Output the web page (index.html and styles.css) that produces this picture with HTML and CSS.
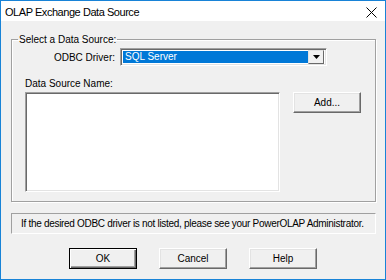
FILE: index.html
```html
<!DOCTYPE html>
<html lang="en">
<head>
    <meta charset="UTF-8">
    <title>OLAP Exchange Data Source</title>
    <link rel="stylesheet" href="styles.css">
</head>
<body>

    <div class="window">
        <div class="titlebar">
            <span class="title">OLAP Exchange Data Source</span>
            <span class="close">
                <svg width="11" height="11" viewBox="0 0 11 11">
                    <path d="M0.5 0.5 L10.5 10.5 M10.5 0.5 L0.5 10.5" stroke="#000" stroke-width="1" fill="none"/>
                </svg>
            </span>
        </div>

        <div class="client">
            <fieldset class="group">
                <legend>Select a Data Source:</legend>

                <div class="driver-row">
                    <label class="driver-label">ODBC Driver:</label>
                    <div class="combo">
                        <span class="combo-value">SQL Server</span>
                        <span class="combo-btn">
                            <svg width="7" height="4" viewBox="0 0 7 4"><path d="M0 0 H7 L3.5 4 Z" fill="#000"/></svg>
                        </span>
                    </div>
                </div>

                <div class="name-label">Data Source Name:</div>
                <div class="name-row">
                    <div class="listbox"></div>
                    <button class="btn add-btn">Add...</button>
                </div>
            </fieldset>

            <div class="info">If the desired ODBC driver is not listed, please see your PowerOLAP Administrator.</div>

            <div class="buttons">
                <button class="btn default">OK</button>
                <button class="btn">Cancel</button>
                <button class="btn">Help</button>
            </div>
        </div>
    </div>

</body>
</html>
```

FILE: styles.css
```css
body {
    margin: 0;
    font-family: "Liberation Sans", Arial, sans-serif;
    font-size: 10px;
    color: #000;
}

.window {
    width: 386px;
    height: 280px;
    box-sizing: border-box;
    border: 1px solid #1883d7;
    background-color: #f0f0f0;
}

.titlebar {
    height: 20px;
    background-color: #fff;
    display: flex;
    align-items: center;
    justify-content: space-between;
    padding: 0 8px 0 4px;
}

.title {
    font-size: 11px;
    letter-spacing: -0.45px;
    padding-top: 1px;
}

.close {
    display: flex;
    margin-top: 3px;
}

.client {
    padding: 12px 9px 0 10px;
}

.group {
    margin: 0;
    padding: 0 0 9px 0;
    width: 365px;
    box-sizing: border-box;
    border: 1px solid #a0a0a0;
    box-shadow: inset 1px 1px 0 #fff, 1px 1px 0 #fff;
}

.group legend {
    margin-left: 6px;
    padding: 0 1px;
    line-height: 13px;
}

.driver-row {
    display: flex;
    align-items: center;
    margin-top: 2px;
}

.driver-label {
    width: 103px;
    text-align: right;
    padding-right: 5px;
}

.combo {
    width: 207px;
    height: 18px;
    box-sizing: border-box;
    border-top: 1px solid #a0a0a0;
    border-left: 1px solid #a0a0a0;
    border-right: 1px solid #fff;
    border-bottom: 1px solid #fff;
    box-shadow: inset 1px 1px 0 #696969, inset -1px -1px 0 #e3e3e3;
    background-color: #fff;
    display: flex;
    padding: 2px;
}

.combo-value {
    flex: 1;
    background-color: #0078d7;
    color: #fff;
    line-height: 12px;
    padding-left: 2px;
}

.combo-btn {
    width: 16px;
    box-sizing: border-box;
    background-color: #f0f0f0;
    border-top: 1px solid #e3e3e3;
    border-left: 1px solid #e3e3e3;
    border-right: 1px solid #696969;
    border-bottom: 1px solid #696969;
    display: flex;
    align-items: center;
    justify-content: center;
    margin-top: -1px;
    margin-bottom: -1px;
}

.name-label {
    margin: 11px 0 0 13px;
    line-height: 13px;
}

.name-row {
    display: flex;
    align-items: flex-start;
    margin-top: 2px;
    padding-left: 13px;
}

.listbox {
    width: 255px;
    height: 100px;
    box-sizing: border-box;
    background-color: #fff;
    border-top: 1px solid #a0a0a0;
    border-left: 1px solid #a0a0a0;
    border-right: 1px solid #fff;
    border-bottom: 1px solid #fff;
    box-shadow: inset 1px 1px 0 #696969, inset -1px -1px 0 #e3e3e3;
}

.btn {
    width: 68px;
    height: 21px;
    box-sizing: border-box;
    font-family: "Liberation Sans", Arial, sans-serif;
    font-size: 10px;
    color: #000;
    background-color: #f0f0f0;
    border-top: 1px solid #fff;
    border-left: 1px solid #fff;
    border-right: 1px solid #696969;
    border-bottom: 1px solid #696969;
    box-shadow: inset -1px -1px 0 #a0a0a0, inset 1px 1px 0 #e3e3e3;
    padding: 0;
}

.add-btn {
    margin-left: 13px;
}

.btn.default {
    border: 1px solid #000;
    box-shadow: inset 1px 1px 0 #fff, inset -1px -1px 0 #696969, inset -2px -2px 0 #a0a0a0;
}

.info {
    margin-top: 11px;
    width: 365px;
    height: 21px;
    box-sizing: border-box;
    border-top: 1px solid #a0a0a0;
    border-left: 1px solid #a0a0a0;
    border-right: 1px solid #fff;
    border-bottom: 1px solid #fff;
    padding-left: 9px;
    line-height: 19px;
    letter-spacing: -0.3px;
    white-space: nowrap;
}

.buttons {
    display: flex;
    justify-content: center;
    gap: 22px;
    margin-top: 14px;
    margin-left: -1px;
}
```
